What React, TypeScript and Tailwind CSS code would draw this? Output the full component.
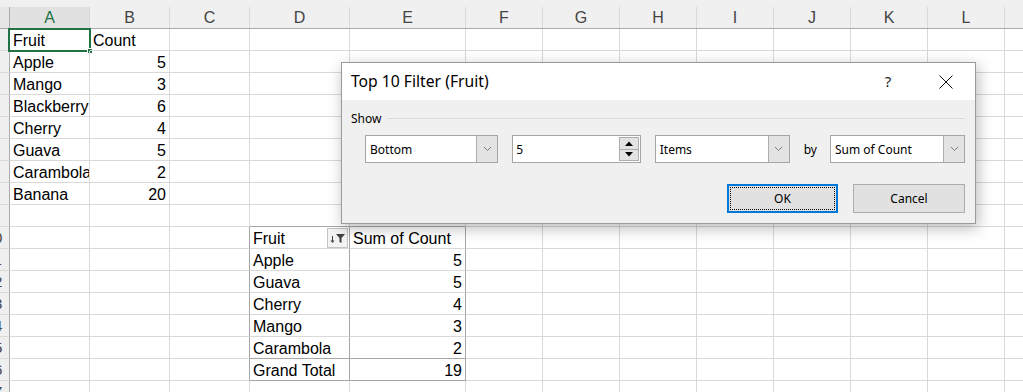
import React from "react";

const COLS = [
  "w-[10px]",
  "w-[80px]",
  "w-[80px]",
  "w-[80px]",
  "w-[100px]",
  "w-[116px]",
  "w-[77px]",
  "w-[77px]",
  "w-[77px]",
  "w-[77px]",
  "w-[77px]",
  "w-[77px]",
  "w-[77px]",
  "w-[60px]",
];
const LETTERS = ["", "A", "B", "C", "D", "E", "F", "G", "H", "I", "J", "K", "L", ""];

type C = { t: string; r?: boolean };
const DATA: Record<number, Record<number, C>> = {
  1: { 1: { t: "Fruit" }, 2: { t: "Count" } },
  2: { 1: { t: "Apple" }, 2: { t: "5", r: true } },
  3: { 1: { t: "Mango" }, 2: { t: "3", r: true } },
  4: { 1: { t: "Blackberry" }, 2: { t: "6", r: true } },
  5: { 1: { t: "Cherry" }, 2: { t: "4", r: true } },
  6: { 1: { t: "Guava" }, 2: { t: "5", r: true } },
  7: { 1: { t: "Carambola" }, 2: { t: "2", r: true } },
  8: { 1: { t: "Banana" }, 2: { t: "20", r: true } },
  10: { 4: { t: "Fruit" }, 5: { t: "Sum of Count" } },
  11: { 4: { t: "Apple" }, 5: { t: "5", r: true } },
  12: { 4: { t: "Guava" }, 5: { t: "5", r: true } },
  13: { 4: { t: "Cherry" }, 5: { t: "4", r: true } },
  14: { 4: { t: "Mango" }, 5: { t: "3", r: true } },
  15: { 4: { t: "Carambola" }, 5: { t: "2", r: true } },
  16: { 4: { t: "Grand Total" }, 5: { t: "19", r: true } },
};

function darkRight(row: number, col: number) {
  return row >= 10 && row <= 16 && (col === 3 || col === 4 || col === 5);
}
function darkBottom(row: number, col: number) {
  return (col === 4 || col === 5) && (row === 9 || row === 15 || row === 16);
}

function FilterIcon() {
  return (
    <svg width="19" height="18" viewBox="0 0 19 18">
      <path d="M4.5 7 V13" stroke="#404040" strokeWidth="1" />
      <path d="M2.5 11.5 L4.5 14 L6.5 11.5 Z" fill="#404040" />
      <path d="M8 5 H17 L13.5 9 V14 L11.5 13 V9 Z" fill="#404040" />
    </svg>
  );
}

function Chevron() {
  return (
    <svg width="9" height="6" viewBox="0 0 9 6">
      <path d="M1 1 L4.5 4.5 L8 1" stroke="#707070" strokeWidth="0.9" fill="none" />
    </svg>
  );
}

function Combo({ value, w }: { value: string; w: string }) {
  return (
    <div className={`${w} h-[28px] flex border border-[#a6a6a6] bg-white`}>
      <div className="flex-1 flex items-center pl-[4px] pt-[1px] text-[12px] text-black">{value}</div>
      <div className="w-[21px] h-full flex items-center justify-center bg-[#e3e3e3] border-l border-[#adadad]">
        <Chevron />
      </div>
    </div>
  );
}

function Dialog() {
  return (
    <div className="absolute left-[341px] top-[62px] w-[635px] h-[162px] border border-[#9a9a9a] bg-[#f0f0f0] shadow-[2px_4px_14px_rgba(0,0,0,0.28)] flex flex-col font-['Noto_Sans',sans-serif]">
      <div className="h-[37px] bg-white flex items-center">
        <div className="flex-1 pl-[9px] text-[15.7px] text-black leading-none">Top 10 Filter (Fruit)</div>
        <div className="w-[46px] flex justify-center text-[15px] text-[#222] leading-none">?</div>
        <div className="w-[46px] ml-[12px] mr-[6px] flex justify-center">
          <svg width="14" height="14" viewBox="0 0 14 14">
            <path d="M0.5 0.5 L13.5 13.5 M13.5 0.5 L0.5 13.5" stroke="#111" strokeWidth="1" />
          </svg>
        </div>
      </div>
      <div className="flex-1 flex flex-col pt-[10px] pl-[9px] pr-[10px]">
        <div className="flex items-center h-[16px]">
          <span className="text-[12px] text-black pt-[2px]">Show</span>
          <div className="flex-1 ml-[6px] h-px bg-[#dcdcdc]" />
        </div>
        <div className="flex items-center mt-[9px] pl-[14px]">
          <Combo value="Bottom" w="w-[134px]" />
          <div className="ml-[14px] w-[129px] h-[28px] flex border border-[#a6a6a6] bg-white">
            <div className="flex-1 flex items-center pl-[3px] pt-[1px] text-[12px] text-black">5</div>
            <div className="w-[20px] my-[1px] mr-[1px] flex flex-col border border-[#adadad]">
              <div className="flex-1 flex items-center justify-center bg-[#e3e3e3] border-b border-[#adadad]">
                <svg width="8" height="5" viewBox="0 0 8 5">
                  <path d="M0 5 L4 0.5 L8 5 Z" fill="#000" />
                </svg>
              </div>
              <div className="flex-1 flex items-center justify-center bg-[#e3e3e3]">
                <svg width="8" height="5" viewBox="0 0 8 5">
                  <path d="M0 0 L4 4.5 L8 0 Z" fill="#000" />
                </svg>
              </div>
            </div>
          </div>
          <div className="ml-[14px]">
            <Combo value="Items" w="w-[135px]" />
          </div>
          <span className="ml-[14px] pt-[1px] text-[12px] text-black">by</span>
          <div className="ml-[13px]">
            <Combo value="Sum of Count" w="w-[135px]" />
          </div>
        </div>
        <div className="flex justify-end gap-[15px] mt-[21px]">
          <div className="w-[111px] h-[29px] border-2 border-[#0078d7] bg-[#e1e1e1] p-[1px]">
            <div className="w-full h-full border border-dotted border-black flex items-center justify-center pt-[1px] text-[12px] text-black">
              OK
            </div>
          </div>
          <div className="w-[112px] h-[29px] border border-[#adadad] bg-[#e1e1e1] flex items-center justify-center pt-[1px] text-[12px] text-black">
            Cancel
          </div>
        </div>
      </div>
    </div>
  );
}

export default function App() {
  const rows = Array.from({ length: 17 }, (_, i) => i + 1);
  return (
    <div className="relative w-[1023px] h-[392px] overflow-hidden bg-white font-['Liberation_Sans',Arial,sans-serif]">
      {/* column header */}
      <div className="flex h-[29px] bg-[#f0f0f0] pt-[7px] border-b border-[#ababab]">
        {COLS.map((w, ci) => (
          <div
            key={ci}
            className={`${w} shrink-0 h-full flex items-center justify-center pt-[1px] text-[16px] border-r ${
              ci === 0 ? "border-[#ababab] bg-[#e6e6e6]" : "border-[#d9d9d9]"
            } ${ci === 1 ? "bg-[#e1e1e1] text-[#217346]" : "text-[#444]"}`}
          >
            {LETTERS[ci]}
          </div>
        ))}
      </div>
      {rows.map((r) => (
        <div key={r} className="flex h-[22px]">
          {COLS.map((w, ci) => {
            if (ci === 0) {
              return (
                <div
                  key={ci}
                  className={`${w} shrink-0 h-full flex justify-end overflow-hidden bg-[#efefef] border-r border-r-[#ababab] border-b border-b-[#d9d9d9]`}
                >
                  <div className="w-[30px] shrink-0 flex items-center justify-center pt-[1px] text-[15px] text-[#444]">
                    {r >= 10 ? r : ""}
                  </div>
                </div>
              );
            }
            const cell = DATA[r]?.[ci];
            const rc = darkRight(r, ci) ? "border-r-[#a6a6a6]" : "border-r-[#d9d9d9]";
            const bc = darkBottom(r, ci) ? "border-b-[#a6a6a6]" : "border-b-[#d9d9d9]";
            const isPivotHead = r === 10 && ci === 4;
            return (
              <div
                key={ci}
                className={`${w} shrink-0 h-full relative border-r border-b ${rc} ${bc} flex items-center pt-[2px] text-[16px] text-black whitespace-nowrap ${
                  cell?.r ? "justify-end pr-[3px]" : "pl-[3px]"
                } ${r === 1 && ci === 1 ? "" : "overflow-hidden"}`}
              >
                {cell ? <span>{cell.t}</span> : null}
                {isPivotHead ? (
                  <div className="absolute right-[1px] top-[1px] w-[21px] h-[20px] bg-[#f3f3f3] border border-[#c4c4c4] flex items-center justify-center">
                    <FilterIcon />
                  </div>
                ) : null}
                {r === 1 && ci === 1 ? (
                  <>
                    <div className="absolute left-[-2px] top-[-1px] w-[83px] h-[24px] border-2 border-[#217346]" />
                    <div className="absolute left-[77px] top-[19px] w-[6px] h-[6px] bg-[#217346] border border-white" />
                  </>
                ) : null}
              </div>
            );
          })}
        </div>
      ))}
      <Dialog />
    </div>
  );
}
